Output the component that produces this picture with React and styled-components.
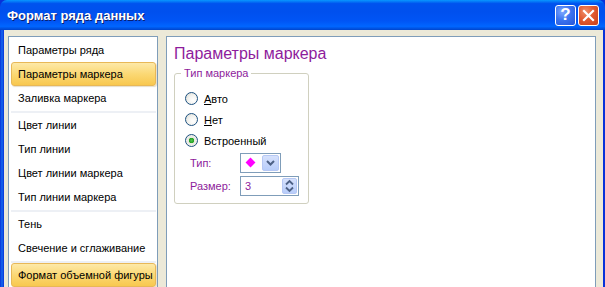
import React from 'react'
import styled, { createGlobalStyle } from 'styled-components'

const Global = createGlobalStyle`
  html, body { margin: 0; padding: 0; background: #ece9d8; }
  #root { width: 605px; height: 287px; overflow: hidden; }
`

const leftItems = [
  ['Параметры ряда', 'Параметры маркера', 'Заливка маркера'],
  ['Цвет линии', 'Тип линии', 'Цвет линии маркера', 'Тип линии маркера'],
  ['Тень', 'Свечение и сглаживание'],
  ['Формат объемной фигуры'],
]
const selected = ['Параметры маркера', 'Формат объемной фигуры']

const App = () => {
  return (
    <Window>
      <Global />
      <TitleBar>
        <Title>Формат ряда данных</Title>
        <Controls>
          <CapButton>?</CapButton>
          <CapButton close>
            <svg width="13" height="13" viewBox="0 0 13 13">
              <path d="M2 2 L11 11 M11 2 L2 11" stroke="#fff" strokeWidth="2.2" strokeLinecap="square" />
            </svg>
          </CapButton>
        </Controls>
      </TitleBar>
      <Frame>
        <Body>
          <Nav>
            {leftItems.map((group, gi) => (
              <React.Fragment key={gi}>
                {gi > 0 && <Separator />}
                {group.map((label) => (
                  <NavItem key={label} active={selected.includes(label)}>{label}</NavItem>
                ))}
              </React.Fragment>
            ))}
          </Nav>
          <Content>
            <Heading>Параметры маркера</Heading>
            <Group>
              <Legend>Тип маркера</Legend>
              <RadioRow>
                <Radio />
                <RadioLabel><u>А</u>вто</RadioLabel>
              </RadioRow>
              <RadioRow>
                <Radio />
                <RadioLabel><u>Н</u>ет</RadioLabel>
              </RadioRow>
              <RadioRow>
                <Radio checked />
                <RadioLabel>Встроенный</RadioLabel>
              </RadioRow>
              <FieldRow>
                <FieldLabel>Тип:</FieldLabel>
                <Combo>
                  <Diamond />
                  <DropButton>
                    <svg width="9" height="6" viewBox="0 0 9 6">
                      <path d="M1 1 L4.5 4.5 L8 1" stroke="#4d6185" strokeWidth="2" fill="none" />
                    </svg>
                  </DropButton>
                </Combo>
              </FieldRow>
              <FieldRow>
                <FieldLabel>Размер:</FieldLabel>
                <Spin>
                  <SpinValue>3</SpinValue>
                  <SpinButton>
                    <svg width="9" height="14" viewBox="0 0 9 14">
                      <path d="M1 5.5 L4.5 2 L8 5.5" stroke="#4d6185" strokeWidth="1.8" fill="none" />
                      <path d="M1 8.5 L4.5 12 L8 8.5" stroke="#4d6185" strokeWidth="1.8" fill="none" />
                    </svg>
                  </SpinButton>
                </Spin>
              </FieldRow>
            </Group>
          </Content>
        </Body>
      </Frame>
    </Window>
  )
}

export default App

const Window = styled.div`
  width: 605px;
  height: 287px;
  display: flex;
  flex-direction: column;
  background: #0831d9;
  font-family: Tahoma, "Liberation Sans", sans-serif;
`

const TitleBar = styled.div`
  height: 30px;
  flex: none;
  display: flex;
  align-items: center;
  justify-content: space-between;
  padding: 0 6px 0 7px;
  background: linear-gradient(to bottom, #0997ff 0%, #0053ee 12%, #0050ee 40%, #0055f5 70%, #0066ff 88%, #0044cc 100%);
  border-radius: 7px 7px 0 0;
`

const Title = styled.div`
  color: #fff;
  font-family: "Liberation Sans", Arial, sans-serif;
  font-weight: bold;
  font-size: 13px;
  text-shadow: 1px 1px 0 #0a1e6e;
`

const Controls = styled.div`
  display: flex;
  gap: 2px;
`

const CapButton = styled.div`
  width: 21px;
  height: 21px;
  box-sizing: border-box;
  border: 1px solid #fff;
  border-radius: 3px;
  display: flex;
  align-items: center;
  justify-content: center;
  color: #fff;
  font-family: "Liberation Sans", Arial, sans-serif;
  font-weight: bold;
  font-size: 17px;
  background: ${(p) =>
    p.close
      ? 'radial-gradient(circle at 35% 30%, #f0906a 0%, #e15a30 45%, #c8401a 100%)'
      : 'radial-gradient(circle at 35% 30%, #80a8ff 0%, #3b74f0 45%, #2556d8 100%)'};
`

const Frame = styled.div`
  flex: 1;
  display: flex;
  padding: 0 0 0 4px;
  background: linear-gradient(to right, #0831d9 0, #166aee 2px, #0831d9 4px, #ece9d8 4px);
  min-height: 0;
`

const Body = styled.div`
  flex: 1;
  display: flex;
  gap: 8px;
  padding: 6px 7px 0 4px;
  background: #ece9d8;
  border-right: 2px solid #0831d9;
`

const Nav = styled.div`
  width: 150px;
  flex: none;
  box-sizing: border-box;
  background: #fff;
  border: 1px solid #7f9db9;
  border-bottom: none;
  padding: 1px 1px 0 2px;
  display: flex;
  flex-direction: column;
`

const NavItem = styled.div`
  height: 24px;
  flex: none;
  box-sizing: border-box;
  display: flex;
  align-items: center;
  padding-left: 6px;
  font-size: 11px;
  color: #000;
  border-radius: 3px;
  border: 1px solid ${(p) => (p.active ? '#e8b857' : 'transparent')};
  background: ${(p) => (p.active ? 'linear-gradient(to bottom, #fde9a8 0%, #fbd874 50%, #f8c84f 100%)' : 'transparent')};
  box-shadow: ${(p) => (p.active ? '1px 1px 1px rgba(150, 120, 40, 0.25)' : 'none')};
`

const Separator = styled.div`
  height: 3px;
  flex: none;
  display: flex;
  align-items: center;
  &::before {
    content: '';
    flex: 1;
    height: 2px;
    background: #edf0f5;
  }
`

const Content = styled.div`
  flex: 1;
  background: #fff;
  border: 1px solid #7f9db9;
  border-bottom: none;
  padding: 7px 0 0 7px;
`

const Heading = styled.div`
  font-family: "Liberation Sans", Arial, sans-serif;
  font-size: 16px;
  color: #8e1c9c;
  line-height: 20px;
`

const Group = styled.div`
  position: relative;
  width: 135px;
  height: 131px;
  box-sizing: border-box;
  margin-top: 9px;
  border: 1px solid #d0d0bf;
  border-radius: 3px;
  padding: 14px 0 0 10px;
`

const Legend = styled.div`
  position: absolute;
  top: -7px;
  left: 6px;
  padding: 0 3px;
  background: #fff;
  font-size: 11px;
  line-height: 13px;
  color: #8e1c9c;
`

const RadioRow = styled.div`
  height: 21px;
  display: flex;
  align-items: center;
  gap: 6px;
`

const Radio = styled.div`
  width: 13px;
  height: 13px;
  box-sizing: border-box;
  border-radius: 50%;
  border: 1px solid #1c5180;
  background: ${(p) =>
    p.checked
      ? 'radial-gradient(circle, #4fc24f 0, #21a121 2.5px, #e8e8e0 3px, #f6f6f2 100%)'
      : 'radial-gradient(circle at 65% 65%, #ffffff 0%, #f2f2ee 50%, #d6d6ce 100%)'};
`

const RadioLabel = styled.span`
  font-size: 11px;
  color: #000;
  u { text-decoration: underline; }
`

const FieldRow = styled.div`
  display: flex;
  align-items: center;
  height: 23px;
  margin-left: 5px;
`

const FieldLabel = styled.span`
  width: 50px;
  font-size: 11px;
  color: #8e1c9c;
`

const Combo = styled.div`
  width: 41px;
  height: 20px;
  box-sizing: border-box;
  border: 1px solid #7f9db9;
  display: flex;
  align-items: center;
  justify-content: space-between;
  padding: 1px;
  background: #fff;
`

const Diamond = styled.div`
  width: 7px;
  height: 7px;
  margin-left: 5px;
  background: #ff00ff;
  transform: rotate(45deg);
`

const DropButton = styled.div`
  width: 17px;
  height: 16px;
  box-sizing: border-box;
  border: 1px solid #b6c8f4;
  border-radius: 2px;
  background: linear-gradient(to bottom, #d6e1fc, #b8cdfa);
  display: flex;
  align-items: center;
  justify-content: center;
`

const Spin = styled.div`
  width: 59px;
  height: 20px;
  box-sizing: border-box;
  border: 1px solid #7f9db9;
  display: flex;
  align-items: center;
  justify-content: space-between;
  padding: 1px;
  background: #fff;
`

const SpinValue = styled.span`
  font-size: 11px;
  color: #8e1c9c;
  margin-left: 3px;
`

const SpinButton = styled.div`
  width: 15px;
  height: 16px;
  box-sizing: border-box;
  border: 1px solid #b6c8f4;
  border-radius: 2px;
  background: linear-gradient(to bottom, #d6e1fc, #b8cdfa);
  display: flex;
  align-items: center;
  justify-content: center;
`
